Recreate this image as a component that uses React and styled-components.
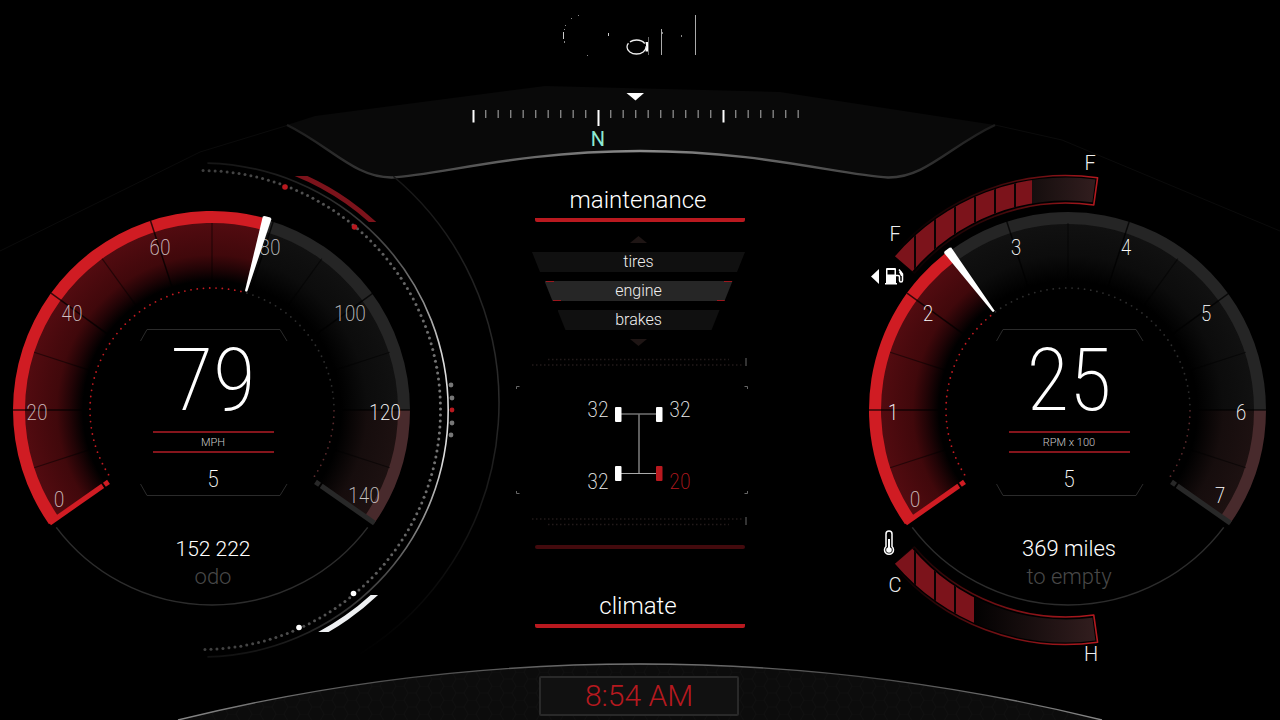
import React from "react";
import styled, { createGlobalStyle } from "styled-components";

const GlobalStyle = createGlobalStyle`
  *, *::before, *::after { box-sizing: border-box; }
  body { margin: 0; background: #000; }
  h2, p { margin: 0; font-weight: inherit; }
`;

const NUMBER_FONT = '"Roboto Condensed", Roboto, sans-serif';

/* ---------- layout ---------- */

const Page = styled.div`
  position: relative;
  display: flex;
  flex-direction: column;
  min-height: 100vh;
  overflow: hidden;
  background: #000;
  color: #fff;
  font-family: Roboto, sans-serif;
  font-weight: 300;
`;

const Backdrop = styled.svg`
  position: absolute;
  inset: 0;
  width: 100%;
  height: 100%;
`;

const Header = styled.header`
  position: relative;
  display: flex;
  flex-direction: column;
  align-items: center;
  gap: 32px;
  height: 154px;
  padding-top: 12px;
`;

const HeaderArt = styled.svg`
  display: block;
  flex: none;
`;

const Main = styled.main`
  position: relative;
  flex: 1;
  display: grid;
  grid-template-columns: 424px minmax(240px, 1fr) 424px;
`;

const Footer = styled.footer`
  position: relative;
  display: flex;
  justify-content: center;
  padding: 16px 0 4px;
`;

const Clock = styled.time`
  width: 200px;
  margin-right: 2px;
  border: 2px solid #292929;
  border-radius: 2px;
  background: #111;
  color: #b5191f;
  font-size: 30px;
  line-height: 36px;
  text-align: center;
`;

/* ---------- gauges ---------- */

const Gauge = styled.section`
  display: grid;
  height: 506px;
  & > * { grid-area: 1 / 1; }
`;

const Dial = styled.svg`
  width: 100%;
  height: 506px;
  overflow: visible;
`;

const DialLabel = styled.text`
  fill: #fff;
  fill-opacity: ${(p) => (p.$strong ? 1 : 0.75)};
  font-family: ${NUMBER_FONT};
  font-size: 22px;
  font-weight: 200;
  text-anchor: middle;
`;

const MeterLetter = styled.text`
  fill: #eee;
  font-size: 20px;
  text-anchor: middle;
`;

const Readout = styled.div`
  position: relative;
  display: flex;
  flex-direction: column;
  align-items: center;
  padding-top: 175px;
  padding-left: 2px;
`;

const BigValue = styled.p`
  font-family: ${NUMBER_FONT};
  font-size: 88px;
  font-weight: 200;
  line-height: 102px;
`;

const Unit = styled.p`
  width: 121px;
  border: solid #85151c;
  border-width: 2px 0;
  padding-top: 1px;
  color: #ccc;
  font-size: 11px;
  line-height: 17px;
  text-align: center;
`;

const Gear = styled.p`
  font-family: ${NUMBER_FONT};
  font-size: 24px;
  font-weight: 200;
  line-height: 52px;
`;

const Total = styled.p`
  padding-top: 30px;
  font-size: ${(p) => p.$size}px;
  line-height: 28px;
`;

const TotalLabel = styled.p`
  color: #484848;
  font-size: 22px;
  line-height: 28px;
`;

/* ---------- centre panel ---------- */

const Panel = styled.section`
  display: flex;
  flex-direction: column;
  align-items: center;
  padding-top: 30px;
`;

const Heading = styled.h2`
  width: 210px;
  padding: 0 4px 6px 0;
  background: linear-gradient(#b9191f, #b9191f) bottom / 100% 4px no-repeat;
  border-radius: 2px;
  font-size: 24px;
  line-height: 32px;
  text-align: center;
`;

const Rule = styled.hr`
  width: 210px;
  height: 4px;
  margin: 15px 0 41px;
  border: 0;
  border-radius: 2px;
  background: #430a0d;
`;

const Menu = styled.nav`
  display: flex;
  flex-direction: column;
  align-items: center;
  gap: 9px;
  padding: 14px 3px 6px 0;
`;

const Arrow = styled.svg`
  display: block;
  width: 17px;
  height: 7px;
`;

const MenuItem = styled.button`
  position: relative;
  width: ${(p) => p.$width}px;
  height: 20px;
  padding: 0;
  border: 0;
  background: ${(p) => (p.$active ? "#262626" : "#101010")};
  clip-path: polygon(0 0, 100% 0, calc(100% - 8px) 100%, 8px 100%);
  color: #f0f0f0;
  font: 300 16px/18px Roboto, sans-serif;
  text-align: center;
  &::before, &::after {
    content: "";
    position: absolute;
    height: 1px;
    border: solid #9c171d;
    border-width: 0 ${(p) => (p.$active ? 8 : 0)}px;
  }
  &::before { top: 0; left: 1px; right: 1px; }
  &::after { bottom: 0; left: 8px; right: 8px; }
`;

const Tyres = styled.svg`
  display: block;
  width: 260px;
  height: 178px;
`;

const TyreValue = styled.text`
  fill: ${(p) => (p.$low ? "#b5191f" : "#eee")};
  font-family: ${NUMBER_FONT};
  font-size: 22px;
  font-weight: 200;
  text-anchor: middle;
`;

/* ---------- geometry: angles run clockwise from nine o'clock ---------- */

const polar = (r, deg, cx = 0, cy = 0) => {
  const a = (deg * Math.PI) / 180;
  return [(cx - r * Math.cos(a)).toFixed(2), (cy - r * Math.sin(a)).toFixed(2)];
};

const arc = (r, from, to, cx = 0, cy = 0) =>
  `M${polar(r, from, cx, cy)} A${r} ${r} 0 ${to - from > 180 ? 1 : 0} 1 ${polar(r, to, cx, cy)}`;

const band = (r1, r2, from, to, cx = 0, cy = 0) =>
  `${arc(r2, from, to, cx, cy)} L${polar(r1, to, cx, cy)} A${r1} ${r1} 0 ${
    to - from > 180 ? 1 : 0
  } 0 ${polar(r1, from, cx, cy)} Z`;

const range = (n) => Array.from({ length: n }, (_, i) => i);

const LABEL_SPOTS = [
  [-153, 89], [-175, 2], [-140, -97], [-52, -163],
  [58, -163], [138, -97], [173, 2], [152, 85],
];

function DialFace({ id, angle, labels, strong }) {
  return (
    <>
      <defs>
        <radialGradient id={`${id}-red`} gradientUnits="userSpaceOnUse" cx="0" cy="0" r="187">
          <stop offset="0.69" stopColor="#000" />
          <stop offset="0.76" stopColor="#220406" />
          <stop offset="0.83" stopColor="#40080b" />
          <stop offset="1" stopColor="#520b10" />
        </radialGradient>
        <radialGradient id={`${id}-grey`} gradientUnits="userSpaceOnUse" cx="0" cy="0" r="187">
          <stop offset="0.69" stopColor="#000" />
          <stop offset="0.83" stopColor="#0c0c0c" />
          <stop offset="1" stopColor="#111" />
        </radialGradient>
        <radialGradient id={`${id}-limit`} gradientUnits="userSpaceOnUse" cx="0" cy="0" r="187">
          <stop offset="0.69" stopColor="#000" />
          <stop offset="0.83" stopColor="#160d0d" />
          <stop offset="1" stopColor="#1d1111" />
        </radialGradient>
      </defs>
      <path d={arc(195, -143, -37)} fill="none" stroke="#2c2c2c" strokeWidth="1.5" />
      <path d={band(120, 187, angle, 180)} fill={`url(#${id}-grey)`} />
      <path d={band(120, 187, 180, 215)} fill={`url(#${id}-limit)`} />
      <path d={band(120, 188, -35, angle)} fill={`url(#${id}-red)`} />
      <path d={band(186, 198, angle, 180)} fill="#252525" />
      <path d={band(186, 198, 180, 215)} fill="#482a2c" />
      <path d={band(187, 199, -35, angle)} fill="#d01c23" />
      {range(13).map((i) => {
        const a = -18 + i * 18;
        const major = i % 2 === 1;
        const [x1, y1] = polar(130, a);
        const [x2, y2] = polar(major ? 199 : 187, a);
        return (
          <line key={i} x1={x1} y1={y1} x2={x2} y2={y2} stroke="#000"
            strokeOpacity={major ? 0.75 : 0.5} strokeWidth={major ? 1.5 : 1.2} />
        );
      })}
      {range(84).map((i) => {
        const a = -32 + i * 2.95;
        const [cx, cy] = polar(122, a);
        const color = a < angle ? "#c41b21" : a < 179 ? "#2e2e2e" : "#5a2a2d";
        return <circle key={i} cx={cx} cy={cy} r="0.9" fill={color} />;
      })}
      <g transform="rotate(-35)" fill="#d01c23">
        <rect x="-198" y="-3" width="65" height="5" />
        <rect x="-131" y="-3" width="5" height="5" />
      </g>
      <g transform="rotate(35)" fill="#282828">
        <rect x="133" y="-3" width="65" height="5" />
        <rect x="126" y="-3" width="5" height="5" />
      </g>
      <path transform={`rotate(${angle})`} fill="#fff"
        d="M-200 -4.500 L-201 -3 V3 L-200 4.500 L-124 1.200 L-123 0 L-124 -1.200 Z" />
      {labels.map((t, i) => (
        <DialLabel key={t} x={LABEL_SPOTS[i][0]} y={LABEL_SPOTS[i][1] + 8} $strong={strong.includes(t)}>
          {t}
        </DialLabel>
      ))}
      <g fill="none" stroke="#2b2b2b">
        <path d="M-71.500 -69 L-65 -80.500 H68 L75 -69" />
        <path d="M-71.500 74 L-65 85.500 H68 L75 74" />
      </g>
    </>
  );
}

function OuterTrack() {
  return (
    <>
      <defs>
        <linearGradient id="track" gradientUnits="userSpaceOnUse" x1="0" y1="-247" x2="0" y2="247">
          <stop offset="0" stopColor="#161616" />
          <stop offset="0.18" stopColor="#4c4c4c" />
          <stop offset="0.4" stopColor="#ddd" />
          <stop offset="0.6" stopColor="#ddd" />
          <stop offset="0.82" stopColor="#505050" />
          <stop offset="1" stopColor="#111" />
        </linearGradient>
        <linearGradient id="halo" gradientUnits="userSpaceOnUse" x1="0" y1="-240" x2="0" y2="250">
          <stop offset="0" stopColor="#161616" />
          <stop offset="0.45" stopColor="#2c2c2c" />
          <stop offset="0.6" stopColor="#1e1e1e" />
          <stop offset="1" stopColor="#000" />
        </linearGradient>
        <clipPath id="hot-clip"><rect x="60" y="-234" width="120" height="46" /></clipPath>
        <clipPath id="cold-clip"><rect x="60" y="185" width="120" height="37" /></clipPath>
      </defs>
      <path d={arc(247, 91.5, 268.5, -11, 0)} fill="none" stroke="url(#track)" strokeWidth="1.6" />
      <path d={arc(296, 130, 238, -9, -7)} fill="none" stroke="url(#halo)" strokeWidth="1.5" />
      {range(125).map((i) => {
        const a = 90.5 + i * 1.44;
        const [cx, cy] = polar(239.5, a, -11, 0);
        const v = Math.round(62 + (1 - Math.abs(a - 180) / 90) * 60);
        return <circle key={i} cx={cx} cy={cy} r="1.5" fill={`rgb(${v},${v},${v})`} />;
      })}
      <path d={arc(254.5, 100, 150, -11, 0)} fill="none" stroke="#7c131b" strokeWidth="5" clipPath="url(#hot-clip)" />
      <path d={arc(253.5, 210, 260, -11, 0)} fill="none" stroke="#eef0f2" strokeWidth="5" clipPath="url(#cold-clip)" />
      <circle cx="73" cy="-223" r="2.8" fill="#b9191f" />
      <circle cx="142.5" cy="-183" r="2.8" fill="#b9191f" />
      <circle cx="141.5" cy="183.5" r="2.8" fill="#fff" />
      <circle cx="87" cy="217.5" r="2.8" fill="#fff" />
      {[-25, -12, 0, 13, 25].map((y) => (
        <circle key={y} cx={Math.abs(y) > 20 ? 239 : 240} cy={y} r="2.4" fill={y === 0 ? "#b9191f" : "#777"} />
      ))}
    </>
  );
}

function Meter({ id, level, flip }) {
  const cx = -2;
  const cy = -7.5;
  return (
    <g transform={flip ? "scale(1 -1)" : undefined}>
      <defs>
        <clipPath id={`${id}-clip`}><path d={band(202, 225, 40.5, 97.5, cx, cy)} /></clipPath>
        <linearGradient id={`${id}-rest`} gradientUnits="userSpaceOnUse" x1={level} y1="0" x2="30" y2="0">
          <stop offset="0" stopColor={flip ? "#020101" : "#150e0e"} />
          <stop offset="1" stopColor="#331e1f" />
        </linearGradient>
        <linearGradient id={`${id}-edge`} gradientUnits="userSpaceOnUse" x1="-173" y1="0" x2="30" y2="0">
          <stop offset="0" stopColor="#a5171c" stopOpacity="0" />
          <stop offset="0.45" stopColor="#a5171c" stopOpacity={flip ? 0.65 : 0.3} />
          <stop offset="1" stopColor="#b5191f" />
        </linearGradient>
      </defs>
      <path d={band(199.5, 227, 40.5, 98, cx, cy)} fill="none" stroke={`url(#${id}-edge)`} strokeWidth="1.6" strokeLinejoin="round" />
      <g clipPath={`url(#${id}-clip)`}>
        <rect x={level} y="-240" width={40 - level} height="140" fill={`url(#${id}-rest)`} />
        <rect x="-180" y="-240" width={180 + level} height="140" fill="#7c131b" />
        {range(6).map((i) => {
          const x = -153 + i * 20;
          return x < level - 5 ? <rect key={i} x={x - 1} y="-240" width="2" height="140" fill="#0a0203" /> : null;
        })}
      </g>
    </g>
  );
}

function FuelIcon() {
  return (
    <g fill="#fff">
      <path d="M-197 -133.500 L-189 -126 V-141 Z" />
      <path fillRule="evenodd" d="M-181 -142 h8 q1 0 1 1 v14 h1 v1.500 h-12 v-1.500 h1 v-14 q0 -1 1 -1 Z M-180.500 -140 v4.500 h7 v-4.500 Z" />
      <path d="M-172 -134.500 h2 q1.500 0 1.500 1.500 v3.500 q0 1.500 1.500 1.500 t1.500 -1.500 v-6.500 l-3.500 -4.500" fill="none" stroke="#fff" strokeWidth="1.5" />
      <path d="M-169 -138 l2 -1 l2 3 v2 h-2 Z" />
    </g>
  );
}

function ThermoIcon() {
  return (
    <g>
      <path d="M-182 136.500 V124 a3 3 0 0 1 6 0 V136.500 a4.500 4.500 0 1 1 -6 0 Z" fill="none" stroke="#fff" strokeWidth="1.5" />
      <circle cx="-179" cy="140" r="2.8" fill="#fff" />
      <path d="M-179 140 V129" stroke="#fff" strokeWidth="2" />
    </g>
  );
}

function Logo() {
  return (
    <HeaderArt width="140" height="48" viewBox="570 12 140 48" overflow="visible" role="img" aria-label="Logo">
      <ellipse cx="636.5" cy="47" rx="9.500" ry="7" fill="none" stroke="#eee" strokeWidth="1.3" strokeDasharray="30 2 16 3" />
      <path d="M645.500 42 h2.500 v9.500 h-2.500 q1.500 -4.500 0 -9.500 Z" fill="#fff" />
      <path d="M661.500 29 V55 M695.500 15 V55" stroke="#aaa" fill="none" />
      <path d="M648.500 37 V55" stroke="#666" fill="none" />
      <path d="M608.500 33 v3 M563.500 32 v7" stroke="#ccc" />
      <path d="M578 15 h1 v1 h-1Z M571 18 h1 v1 h-1Z M565 25 h1 v1 h-1Z M564 29 h1 v1 h-1Z M564 41 h1 v2 h-1Z M587 55 h1 v1 h-1Z M681 35 h1 v2 h-1Z M662 32 h1 v2 h-1Z" fill="#888" />
    </HeaderArt>
  );
}

const CompassMark = styled.text`
  fill: #8eead2;
  font-size: 20px;
  font-weight: 400;
  text-anchor: middle;
`;

function Compass() {
  return (
    <HeaderArt width="340" height="58" viewBox="470 92 340 58" role="img" aria-label="Compass">
      <path d="M626.500 93 H644 L635.500 100.500 Z" fill="#fff" />
      {range(27).map((i) => {
        const major = i % 10 === 0;
        return (
          <rect key={i} x={472.5 + i * 12.5} y="110" width={major ? 2 : 1.4}
            height={i === 10 ? 16 : major ? 12.5 : 8} fill={major ? "#fff" : "#828282"} />
        );
      })}
      <CompassMark x="598" y="146">N</CompassMark>
    </HeaderArt>
  );
}

function Scenery() {
  return (
    <Backdrop viewBox="0 0 1280 720" preserveAspectRatio="xMidYMax slice" aria-hidden="true">
      <defs>
        <linearGradient id="rim" gradientUnits="userSpaceOnUse" x1="287" y1="0" x2="993" y2="0">
          <stop offset="0" stopColor="#1c1c1c" />
          <stop offset="0.2" stopColor="#484848" />
          <stop offset="0.5" stopColor="#8c8c8c" />
          <stop offset="0.8" stopColor="#484848" />
          <stop offset="1" stopColor="#1c1c1c" />
        </linearGradient>
        <linearGradient id="hood" gradientUnits="userSpaceOnUse" x1="178" y1="0" x2="1102" y2="0">
          <stop offset="0" stopColor="#888" />
          <stop offset="0.25" stopColor="#4a4a4a" />
          <stop offset="0.5" stopColor="#777" />
          <stop offset="0.75" stopColor="#4a4a4a" />
          <stop offset="1" stopColor="#888" />
        </linearGradient>
        <pattern id="hex" width="24" height="14" patternUnits="userSpaceOnUse">
          <path d="M0 7 h8 l4 -7 M8 7 l4 7 M12 0 h8 l4 7 M20 14 l4 -7" fill="none" stroke="#101010" />
        </pattern>
      </defs>
      <path d="M0 251 L200 152 L287 125.500 M995 125 L1062 140 L1280 231" fill="none" stroke="#0b0b0b" />
      <path d="M287 125 L315 116 L545 86 L780 92 L995 125 C950 146 925 178 888 177.500 C840 175 760 151 640 151 C520 151 440 177 392 177.500 C355 178 330 146 287 125 Z" fill="#090909" />
      <path d="M287 125 C330 146 355 178 392 177.500 C440 175 520 151 640 151 C760 151 840 175 888 177.500 C925 178 950 146 995 125" fill="none" stroke="url(#rim)" strokeWidth="2.4" />
      <path d="M178 720 A1934 1934 0 0 1 1102 720 Z" fill="#0c0c0c" />
      <path d="M178 720 A1934 1934 0 0 1 1102 720 Z" fill="url(#hex)" />
      <path d="M178 720 A1934 1934 0 0 1 1102 720" fill="none" stroke="url(#hood)" strokeWidth="1.4" />
    </Backdrop>
  );
}

function TyreDiagram() {
  return (
    <Tyres viewBox="-130 -89 260 178" role="img" aria-label="Tire pressure">
      <g stroke="#221a1a" strokeWidth="1.5" strokeDasharray="1.5 2.5">
        <path d="M-92 -81.500 H89 M-108 -76 H104 M-108 78 H104 M-92 83.500 H89" />
      </g>
      <path d="M106 -83 V-75 M106 76 V84" stroke="#333" strokeWidth="2" />
      <path d="M-123.500 -52 v-2.500 h3 M107.500 -52 v-2.500 h-3 M-123.500 50 v2.500 h3 M107.500 50 v2.500 h-3" fill="none" stroke="#666" />
      <path d="M-22 -27 H19 M-22 32.500 H19" stroke="#aaa" strokeWidth="1.2" />
      <path d="M-1 -27 V32" stroke="#777" strokeWidth="1.6" />
      <g fill="#fff">
        <rect x="-25" y="-34" width="6.5" height="15" rx="1" />
        <rect x="16" y="-34" width="6.5" height="15" rx="1" />
        <rect x="-25" y="25" width="6.5" height="15" rx="1" />
        <rect x="16" y="25" width="6.5" height="15" rx="1" fill="#b9191f" />
      </g>
      <TyreValue x="-42" y="-24">32</TyreValue>
      <TyreValue x="40" y="-24">32</TyreValue>
      <TyreValue x="-42" y="48">32</TyreValue>
      <TyreValue x="40" y="48" $low>20</TyreValue>
    </Tyres>
  );
}

const MENU = [
  { name: "tires", width: 213 },
  { name: "engine", width: 188, active: true },
  { name: "brakes", width: 162 },
];

export default function App() {
  return (
    <Page>
      <GlobalStyle />
      <Scenery />
      <Header>
        <Logo />
        <Compass />
      </Header>
      <Main>
        <Gauge>
          <Dial viewBox="-212 -256 424 506" aria-label="Speed">
            <OuterTrack />
            <DialFace id="speed" angle={106} strong={["120"]}
              labels={["0", "20", "40", "60", "80", "100", "120", "140"]} />
          </Dial>
          <Readout>
            <BigValue>79</BigValue>
            <Unit>MPH</Unit>
            <Gear>5</Gear>
            <Total $size={21}>152 222</Total>
            <TotalLabel>odo</TotalLabel>
          </Readout>
        </Gauge>

        <Panel>
          <Heading>maintenance</Heading>
          <Menu>
            <Arrow viewBox="0 0 17 7"><path d="M0 7 L8.500 0 L17 7 Z" fill="#1e1514" /></Arrow>
            {MENU.map((m) => (
              <MenuItem key={m.name} type="button" $width={m.width} $active={m.active}>{m.name}</MenuItem>
            ))}
            <Arrow viewBox="0 0 17 7"><path d="M0 0 L8.500 7 L17 0 Z" fill="#1e1514" /></Arrow>
          </Menu>
          <TyreDiagram />
          <Rule />
          <Heading>climate</Heading>
        </Panel>

        <Gauge>
          <Dial viewBox="-212 -256 424 506" aria-label="Engine speed">
            <Meter id="fuel" level={-36} />
            <Meter id="temp" level={-94} flip />
            <DialFace id="rpm" angle={53} strong={["1", "2", "3", "4", "5", "6", "7"]}
              labels={["0", "1", "2", "3", "4", "5", "6", "7"]} />
            <FuelIcon />
            <ThermoIcon />
            <MeterLetter x="22" y="-240">F</MeterLetter>
            <MeterLetter x="-173" y="-169">F</MeterLetter>
            <MeterLetter x="-173" y="182">C</MeterLetter>
            <MeterLetter x="23" y="251">H</MeterLetter>
          </Dial>
          <Readout>
            <BigValue>25</BigValue>
            <Unit>RPM x 100</Unit>
            <Gear>5</Gear>
            <Total $size={22}>369 miles</Total>
            <TotalLabel>to empty</TotalLabel>
          </Readout>
        </Gauge>
      </Main>
      <Footer>
        <Clock>8:54 AM</Clock>
      </Footer>
    </Page>
  );
}
